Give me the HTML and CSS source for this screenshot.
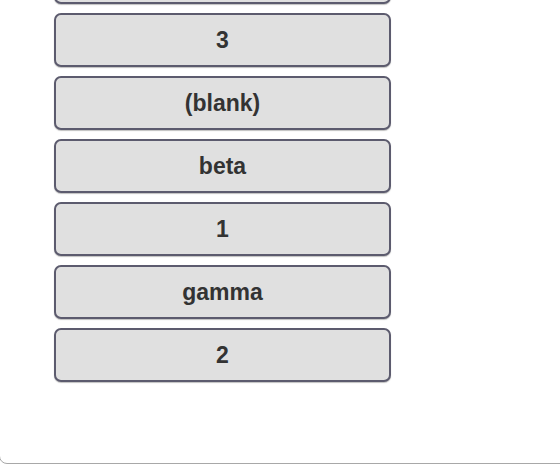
FILE: index.html
```html
<!DOCTYPE html>
<html>
<head>
  <title>Values</title>
  <link rel="stylesheet" href="styles.css">
</head>
<body>
  <div class="panel">
    <ul class="list">
      <li class="item">alpha</li>
      <li class="item">3</li>
      <li class="item">(blank)</li>
      <li class="item">beta</li>
      <li class="item">1</li>
      <li class="item">gamma</li>
      <li class="item">2</li>
    </ul>
  </div>
</body>
</html>
```

FILE: styles.css
```css
body {
  margin: 0;
  background: #fff;
  font-family: 'Liberation Sans', Arial, sans-serif;
  overflow: hidden;
}

.panel {
  width: 620px;
  margin: -61px 0 0 -1px;
  padding: 10px 0 81px 54px;
  border: 1px solid #a8a8a8;
  border-radius: 8px;
  background: #fff;
  box-sizing: border-box;
}

.list {
  list-style: none;
  margin: 0;
  padding: 0;
  display: flex;
  flex-direction: column;
  gap: 9px;
  width: 337px;
}

.item {
  height: 54px;
  display: flex;
  align-items: center;
  justify-content: center;
  background: #e0e0e0;
  border: 2px solid #5c5b6e;
  border-radius: 7px;
  box-sizing: border-box;
  box-shadow: 0 1px 1px rgba(0,0,0,0.25);
  font-size: 23px;
  font-weight: bold;
  color: #333;
}
```
